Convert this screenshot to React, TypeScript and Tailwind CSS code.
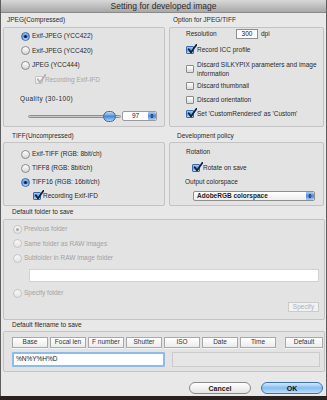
import React from "react";

const Radio = ({ on, disabled }: { on?: boolean; disabled?: boolean }) => (
  <span
    className={`flex h-[9px] w-[9px] shrink-0 items-center justify-center rounded-full border ${
      disabled
        ? "border-[#c4c4c4] bg-gradient-to-b from-[#f8f8f8] to-[#e4e4e4]"
        : on
        ? "border-[#3a69a8] bg-gradient-to-b from-[#9cc4f0] via-[#5a92d6] to-[#bcdcfb]"
        : "border-[#8a8a8a] bg-gradient-to-b from-white to-[#d6d6d6]"
    }`}
  >
    {on && <span className={`h-[3px] w-[3px] rounded-full ${disabled ? "bg-[#a8a8a8]" : "bg-[#0d1c36]"}`} />}
  </span>
);

const Check = ({ on, disabled }: { on?: boolean; disabled?: boolean }) => (
  <span
    className={`relative h-[8px] w-[8px] shrink-0 rounded-[1px] border ${
      disabled
        ? "border-[#c4c4c4] bg-gradient-to-b from-[#f8f8f8] to-[#e6e6e6]"
        : on
        ? "border-[#3a69a8] bg-gradient-to-b from-[#a6cbf2] via-[#5f95d8] to-[#bcdcfb]"
        : "border-[#8a8a8a] bg-gradient-to-b from-white to-[#dadada]"
    }`}
  >
    {on && (
      <svg viewBox="0 0 10 10" className="absolute -left-[0.5px] -top-[3px] h-[10px] w-[10px]">
        <path d="M1.8 5.2 L4 8.4 L9.4 0.8" fill="none" stroke={disabled ? "#b0b0b0" : "#0f1f3c"} strokeWidth="1.7" strokeLinecap="round" strokeLinejoin="round" />
      </svg>
    )}
  </span>
);

const Stepper = () => (
  <span className="flex h-full w-[8px] shrink-0 items-center justify-center rounded-r-[2px] bg-gradient-to-b from-[#a9cff5] via-[#4f8ad3] to-[#a5d0fb]">
    <svg viewBox="0 0 6 8" className="h-[6px] w-[4px]">
      <path d="M3 0.5 L5.5 3.2 L0.5 3.2 Z M3 7.5 L5.5 4.8 L0.5 4.8 Z" fill="#0e1f3d" />
    </svg>
  </span>
);

const Group = ({ label, labelClass, boxClass, children }: { label: string; labelClass: string; boxClass: string; children?: React.ReactNode }) => (
  <div className="flex flex-col">
    <div className={`flex items-center ${labelClass}`}>{label}</div>
    <div className={`flex flex-col rounded-[2px] border border-[#c3c3c3] bg-[#e3e3e3] ${boxClass}`}>{children}</div>
  </div>
);

const NameButton = ({ text, w }: { text: string; w: string }) => (
  <span className={`flex h-[11px] items-center justify-center border border-[#a9a9a9] bg-gradient-to-b from-white to-[#ececec] text-[#333] shadow-[0_1px_0_#f6f6f6] ${w}`}>{text}</span>
);

export default function App() {
  return (
    <div className="h-[400px] w-[327px] overflow-hidden bg-[#2a2020] font-['Liberation_Sans',Arial,sans-serif] text-[6.5px] leading-none text-[#2a2a2a]">
      <div className="flex h-[396px] flex-col border-x border-[#5e5e5e] bg-[#e8e8e8]">
        <div className="flex h-[13px] shrink-0 items-center justify-center border-b border-[#8a8a8a] bg-gradient-to-b from-[#d8d8d8] to-[#a8a8a8] text-[8.5px] text-[#2b2b2b]">
          Setting for developed image
        </div>

        <div className="flex flex-col pl-[2px] pr-[1px]">
          <div className="grid grid-cols-[162px_155px] gap-x-[4px]">
            <Group label="JPEG(Compressed)" labelClass="h-[14px] pl-[4px]" boxClass="h-[100px] pt-[1px]">
              <div className="flex h-[14.5px] items-center gap-[2px] pl-[17px]"><Radio on />Exif-JPEG (YCC422)</div>
              <div className="flex h-[14.5px] items-center gap-[2px] pl-[17px]"><Radio />Exif-JPEG (YCC420)</div>
              <div className="flex h-[14.5px] items-center gap-[2px] pl-[17px]"><Radio />JPEG (YCC444)</div>
              <div className="flex h-[14.5px] items-center gap-[2px] pl-[31px] text-[#a6a6a6]"><Check on disabled />Recording Exif-IFD</div>
              <div className="mt-[6px] flex h-[12px] items-center pl-[16px] tracking-[0.4px]">Quality (30-100)</div>
              <div className="mt-[5px] flex h-[12px] items-center pl-[24px]">
                <div className="relative h-[12px] w-[93px]">
                  <div className="absolute left-0 right-0 top-[4.5px] h-[3px] rounded-full border border-[#8d8d8d] bg-gradient-to-b from-[#b4b4b4] to-[#e2e2e2]" />
                  <div className="absolute left-[75px] top-[0.5px] h-[11px] w-[13px] rounded-full border border-[#3a69a8] bg-gradient-to-b from-[#c5def8] via-[#4f88d0] to-[#a8d2fa]" />
                </div>
                <div className="ml-[1px] flex h-[10px] w-[35px] items-center overflow-hidden rounded-[2px] border border-[#9a9a9a] bg-white">
                  <span className="flex-1 text-center text-[#222]">97</span>
                  <Stepper />
                </div>
              </div>
            </Group>

            <Group label="Option for JPEG/TIFF" labelClass="h-[14px] pl-[4px]" boxClass="h-[100px]">
              <div className="flex h-[12px] items-center pl-[16px]">
                <span className="w-[50px]">Resolution</span>
                <span className="flex h-[10px] w-[22px] items-center justify-center border border-[#8f8f8f] bg-white text-[#111]">300</span>
                <span className="ml-[3px]">dpi</span>
              </div>
              <div className="mt-[3px] flex h-[14px] items-center gap-[3px] pl-[16px]"><Check on />Record ICC profile</div>
              <div className="mt-[1px] flex h-[21px] items-center gap-[3px] pl-[16px]">
                <Check />
                <span className="leading-[9px]">Discard SILKYPIX parameters and image<br />information</span>
              </div>
              <div className="flex h-[14px] items-center gap-[3px] pl-[16px]"><Check />Discard thumbnail</div>
              <div className="flex h-[14px] items-center gap-[3px] pl-[16px]"><Check />Discard orientation</div>
              <div className="flex h-[14px] items-center gap-[3px] pl-[16px]"><Check on />Set 'CustomRendered' as 'Custom'</div>
            </Group>

            <Group label="TIFF(Uncompressed)" labelClass="h-[15px] pl-[9px] pt-[3px]" boxClass="h-[64px] pt-[4px]">
              <div className="flex h-[14px] items-center gap-[2px] pl-[17px]"><Radio />Exif-TIFF (RGB: 8bit/ch)</div>
              <div className="flex h-[14px] items-center gap-[2px] pl-[17px]"><Radio />TIFF8 (RGB: 8bit/ch)</div>
              <div className="flex h-[14px] items-center gap-[2px] pl-[17px]"><Radio on />TIFF16 (RGB: 16bit/ch)</div>
              <div className="flex h-[14px] items-center gap-[2px] pl-[29px]"><Check on />Recording Exif-IFD</div>
            </Group>

            <Group label="Development policy" labelClass="h-[15px] pl-[8px] pt-[3px]" boxClass="h-[64px] pt-[3px]">
              <div className="flex h-[12px] items-center pl-[16px]">Rotation</div>
              <div className="mt-[3px] flex h-[14px] items-center gap-[3px] pl-[22px]"><Check on />Rotate on save</div>
              <div className="mt-[1px] flex h-[12px] items-center pl-[15px]">Output colorspace</div>
              <div className="ml-[23px] mt-[3px] flex h-[10px] w-[122px] items-center overflow-hidden rounded-[2px] border border-[#8f8f8f] bg-gradient-to-b from-white to-[#eeeeee]">
                <span className="flex-1 pl-[3px] font-bold text-[#222]">AdobeRGB colorspace</span>
                <Stepper />
              </div>
            </Group>
          </div>

          <Group label="Default folder to save" labelClass="h-[13px] pl-[9px]" boxClass="h-[101px] pt-[2px] text-[#a2a2a2]">
            <div className="flex h-[14.5px] items-center gap-[2px] pl-[9px]"><Radio on disabled />Previous folder</div>
            <div className="flex h-[14.5px] items-center gap-[2px] pl-[9px]"><Radio disabled />Same folder as RAW images</div>
            <div className="flex h-[14.5px] items-center gap-[2px] pl-[9px]"><Radio disabled />Subfolder in RAW image folder</div>
            <div className="ml-[25px] mr-[5px] mt-[3.5px] h-[13px] border border-[#d2d2d2] bg-white" />
            <div className="mt-[4px] flex h-[14px] items-center gap-[2px] pl-[9px]"><Radio disabled />Specify folder</div>
            <span className="mr-[5px] mt-[2px] flex h-[10px] w-[31px] items-center justify-center self-end border border-[#cbcbcb] bg-[#f2f2f2] text-[#b0b0b0]">Specify</span>
          </Group>

          <Group label="Default filename to save" labelClass="h-[11px] pl-[9px]" boxClass="h-[41px] pt-[5px]">
            <div className="flex items-center gap-[2px] pl-[8px] pr-[1px]">
              <NameButton text="Base" w="w-[36px]" />
              <NameButton text="Focal len" w="w-[36px]" />
              <NameButton text="F number" w="w-[36px]" />
              <NameButton text="Shutter" w="w-[36px]" />
              <NameButton text="ISO" w="w-[36px]" />
              <NameButton text="Date" w="w-[36px]" />
              <NameButton text="Time" w="w-[36px]" />
              <span className="ml-auto flex">
                <NameButton text="Default" w="w-[38px]" />
              </span>
            </div>
            <div className="mt-[4px] flex h-[15px] items-center pl-[8px]">
              <span className="flex h-[15px] w-[153px] items-center rounded-[1px] border-2 border-[#8dbcec] bg-white pl-[2px] text-[#222]">%N%Y%H%D</span>
              <span className="ml-[7px] h-[15px] w-[148px] border border-[#cbcbcb] bg-[#e6e6e6]" />
            </div>
          </Group>

          <div className="flex h-[24px] justify-end gap-[10px] pr-[2px] pt-[10px]">
            <span className="flex h-[12px] w-[62px] items-center justify-center rounded-full border border-[#8a8a8a] bg-gradient-to-b from-white to-[#e4e4e4] text-[7px] font-bold text-[#222]">Cancel</span>
            <span className="flex h-[12px] w-[62px] items-center justify-center rounded-full border border-[#3c72b6] bg-gradient-to-b from-[#d4eafd] via-[#86bcef] to-[#bfe0fc] text-[7px] font-bold text-[#111]">OK</span>
          </div>
        </div>
      </div>
    </div>
  );
}
